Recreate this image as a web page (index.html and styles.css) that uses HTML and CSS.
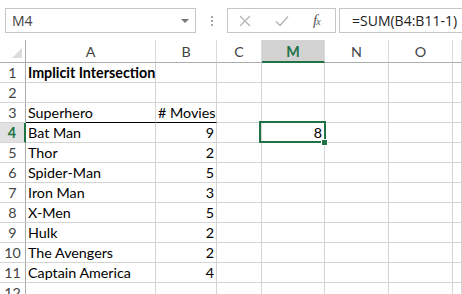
FILE: index.html
```html
<!DOCTYPE html>
<html>
	<head>
		<title>Implicit Intersection</title>
		<link rel="stylesheet" href="styles.css">
	</head>
	<body>
	<div class="toolbar">
		<div class="namebox"><span>M4</span><span class="arrow"></span></div>
		<div class="grip"><i></i><i></i><i></i></div>
		<div class="buttons">
			<svg width="12" height="12" viewBox="0 0 12 12"><path d="M1 1L11 11M11 1L1 11" stroke="#b3b3b3" stroke-width="1.3" fill="none"/></svg>
			<svg width="14" height="12" viewBox="0 0 14 12"><path d="M1 6.5L5 10.5L13 1.5" stroke="#b3b3b3" stroke-width="1.3" fill="none"/></svg>
			<span class="fx">f<sub>x</sub></span>
		</div>
		<div class="formula">=SUM(B4:B11-1)</div>
	</div>
	<div class="sheet">
		<div class="row head">
			<div class="c rh corner"><span class="tri"></span></div>
			<div class="c ca">A</div><div class="c cb">B</div><div class="c cc">C</div>
			<div class="c cm sel">M</div><div class="c cn">N</div><div class="c co">O</div><div class="c cp"></div>
		</div>
		<div class="row">
			<div class="c rh">1</div><div class="c ca bold">Implicit Intersection</div><div class="c cb"></div><div class="c cc"></div>
			<div class="c cm"></div><div class="c cn"></div><div class="c co"></div><div class="c cp"></div>
		</div>
		<div class="row">
			<div class="c rh">2</div><div class="c ca"></div><div class="c cb"></div><div class="c cc"></div>
			<div class="c cm"></div><div class="c cn"></div><div class="c co"></div><div class="c cp"></div>
		</div>
		<div class="row">
			<div class="c rh">3</div><div class="c ca under">Superhero</div><div class="c cb num under">#&nbsp;Movies</div><div class="c cc"></div>
			<div class="c cm"></div><div class="c cn"></div><div class="c co"></div><div class="c cp"></div>
		</div>
		<div class="row">
			<div class="c rh sel">4</div><div class="c ca">Bat Man</div><div class="c cb num">9</div><div class="c cc"></div>
			<div class="c cm num active">8<span class="handle"></span></div><div class="c cn"></div><div class="c co"></div><div class="c cp"></div>
		</div>
		<div class="row">
			<div class="c rh">5</div><div class="c ca">Thor</div><div class="c cb num">2</div><div class="c cc"></div>
			<div class="c cm"></div><div class="c cn"></div><div class="c co"></div><div class="c cp"></div>
		</div>
		<div class="row">
			<div class="c rh">6</div><div class="c ca">Spider-Man</div><div class="c cb num">5</div><div class="c cc"></div>
			<div class="c cm"></div><div class="c cn"></div><div class="c co"></div><div class="c cp"></div>
		</div>
		<div class="row">
			<div class="c rh">7</div><div class="c ca">Iron Man</div><div class="c cb num">3</div><div class="c cc"></div>
			<div class="c cm"></div><div class="c cn"></div><div class="c co"></div><div class="c cp"></div>
		</div>
		<div class="row">
			<div class="c rh">8</div><div class="c ca">X-Men</div><div class="c cb num">5</div><div class="c cc"></div>
			<div class="c cm"></div><div class="c cn"></div><div class="c co"></div><div class="c cp"></div>
		</div>
		<div class="row">
			<div class="c rh">9</div><div class="c ca">Hulk</div><div class="c cb num">2</div><div class="c cc"></div>
			<div class="c cm"></div><div class="c cn"></div><div class="c co"></div><div class="c cp"></div>
		</div>
		<div class="row">
			<div class="c rh">10</div><div class="c ca">The Avengers</div><div class="c cb num">2</div><div class="c cc"></div>
			<div class="c cm"></div><div class="c cn"></div><div class="c co"></div><div class="c cp"></div>
		</div>
		<div class="row">
			<div class="c rh">11</div><div class="c ca">Captain America</div><div class="c cb num">4</div><div class="c cc"></div>
			<div class="c cm"></div><div class="c cn"></div><div class="c co"></div><div class="c cp"></div>
		</div>
		<div class="row">
			<div class="c rh">12</div><div class="c ca"></div><div class="c cb"></div><div class="c cc"></div>
			<div class="c cm"></div><div class="c cn"></div><div class="c co"></div><div class="c cp"></div>
		</div>
	</div>
	</body>
</html>
```

FILE: styles.css
```css
body{margin:0; background:#fff; font-family:"Lato", "Liberation Sans", sans-serif; overflow:hidden; width:462px; height:294px;}

.toolbar{display:flex; height:40px; box-sizing:border-box; padding:8px 0 0 5px; font-family:"Open Sans", "Noto Sans", sans-serif;}
.namebox{width:191px; height:25px; box-sizing:border-box; border:1px solid #c6c6c6; display:flex; align-items:center; justify-content:space-between; padding:0 6px 0 6px; font-size:14px; color:#444;}
.arrow{width:0; height:0; border-left:4px solid transparent; border-right:4px solid transparent; border-top:4px solid #777;}
.grip{width:31px; display:flex; flex-direction:column; align-items:center; justify-content:center; gap:2px; height:25px;}
.grip i{width:2px; height:2px; background:#a6a6a6; display:block;}
.buttons{width:109px; height:25px; box-sizing:border-box; border:1px solid #c6c6c6; display:flex; align-items:center; padding-left:11px;}
.buttons svg:first-child{margin-right:24px;}
.buttons svg:nth-child(2){margin-right:24px;}
.fx{font-family:"Liberation Serif", serif; font-style:italic; font-size:15px; color:#555; line-height:1;}
.fx sub{font-size:10px; vertical-align:0; margin-left:-1px;}
.formula{flex:1; height:25px; box-sizing:border-box; margin-left:3px; margin-right:-5px; border:1px solid #c6c6c6; border-right:none; padding-left:12px; font-size:14px; line-height:23px; color:#222;}

.sheet{font-size:14.3px; color:#000;}
.row{display:flex; height:20px;}
.row.head{height:23px;}
.c{box-sizing:border-box; border-right:1px solid #d4d4d4; border-bottom:1px solid #d4d4d4; white-space:nowrap; line-height:19px; padding:0 2px; position:relative;}
.rh{width:26px; flex:none; text-align:center; color:#444; padding:0; border-right-color:#ababab; background:#fff;}
.ca{width:130px; flex:none; overflow:visible;}
.cb{width:61px; flex:none;}
.cc{width:45px; flex:none;}
.cm{width:63px; flex:none;}
.cn{width:64px; flex:none;}
.co{width:64px; flex:none;}
.cp{flex:1;}
.head .c{text-align:center; color:#444; line-height:24px; border-bottom-color:#ababab; border-right-color:#dadada;}
.head .c.corner{border-right-color:#ababab;}
.tri{position:absolute; right:3px; bottom:4px; width:0; height:0; border-left:10px solid transparent; border-bottom:10px solid #dcdcdc;}
.head .sel{background:#d2d2d2; color:#217346; font-weight:bold; border-bottom:2px solid #217346; line-height:23px;}
.rh.sel{background:#e1e1e1; color:#217346; font-weight:bold; border-right:2px solid #217346;}
.bold{font-weight:bold;}
.num{text-align:right; padding-right:2px;}
.under{border-bottom-color:#000;}
.active{overflow:visible; z-index:2;}
.active::before{content:""; position:absolute; left:-3px; top:-2px; right:-2px; bottom:-1px; border:2px solid #217346;}
.handle{position:absolute; right:-4px; bottom:-4px; width:5px; height:5px; background:#217346; border:1px solid #fff;}
```
